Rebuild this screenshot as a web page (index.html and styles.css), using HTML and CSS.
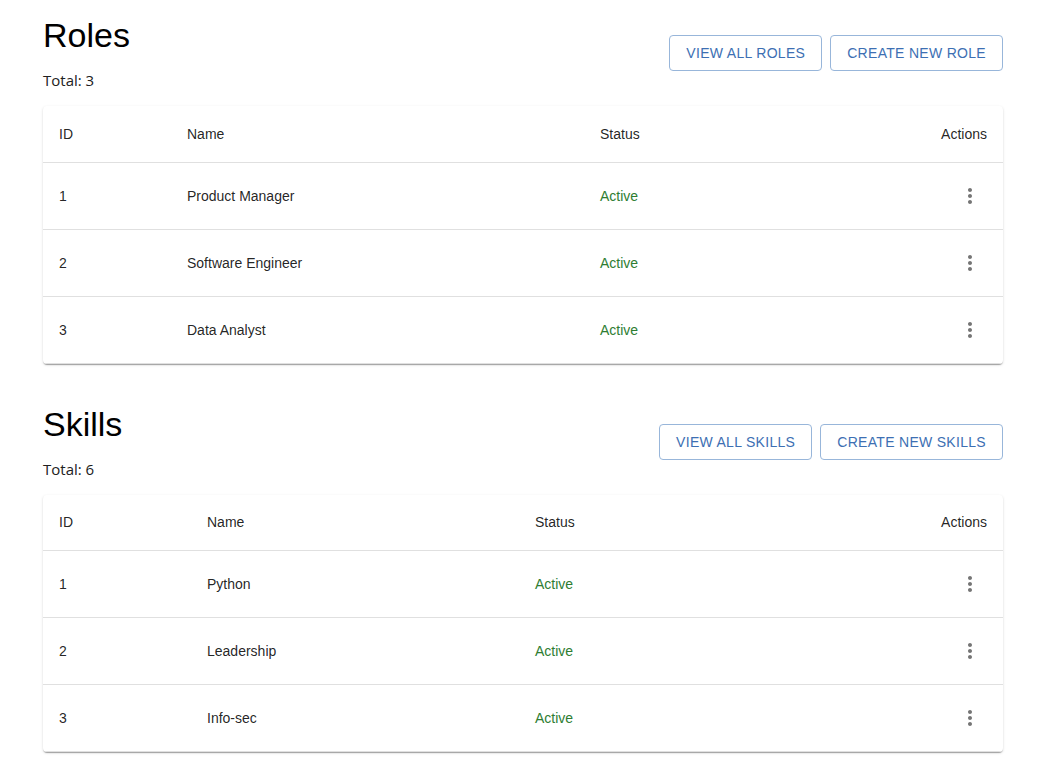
FILE: index.html
```html
<!DOCTYPE html>
<html lang="en">
<head>
<meta charset="utf-8">
<title>Roles and Skills</title>
<link rel="stylesheet" href="styles.css">
</head>
<body>
<main class="container">
  <section class="section">
    <header class="section-head">
      <div class="head-text">
        <h1 class="title">Roles</h1>
        <div class="total">Total: 3</div>
      </div>
      <div class="actions-bar">
        <button class="btn">View all roles</button>
        <button class="btn">Create new role</button>
      </div>
    </header>
    <div class="card">
      <table class="grid roles">
        <colgroup>
          <col class="c-id"><col class="c-name"><col class="c-status"><col class="c-act">
        </colgroup>
        <thead>
          <tr><th>ID</th><th>Name</th><th>Status</th><th class="right">Actions</th></tr>
        </thead>
        <tbody>
          <tr><td>1</td><td>Product Manager</td><td class="active">Active</td><td class="right"><button class="icon-btn" aria-label="more"><svg viewBox="0 0 24 24" width="24" height="24"><path d="M12 8c1.1 0 2-.9 2-2s-.9-2-2-2-2 .9-2 2 .9 2 2 2zm0 2c-1.1 0-2 .9-2 2s.9 2 2 2 2-.9 2-2-.9-2-2-2zm0 6c-1.1 0-2 .9-2 2s.9 2 2 2 2-.9 2-2-.9-2-2-2z"/></svg></button></td></tr>
          <tr><td>2</td><td>Software Engineer</td><td class="active">Active</td><td class="right"><button class="icon-btn" aria-label="more"><svg viewBox="0 0 24 24" width="24" height="24"><path d="M12 8c1.1 0 2-.9 2-2s-.9-2-2-2-2 .9-2 2 .9 2 2 2zm0 2c-1.1 0-2 .9-2 2s.9 2 2 2 2-.9 2-2-.9-2-2-2zm0 6c-1.1 0-2 .9-2 2s.9 2 2 2 2-.9 2-2-.9-2-2-2z"/></svg></button></td></tr>
          <tr><td>3</td><td>Data Analyst</td><td class="active">Active</td><td class="right"><button class="icon-btn" aria-label="more"><svg viewBox="0 0 24 24" width="24" height="24"><path d="M12 8c1.1 0 2-.9 2-2s-.9-2-2-2-2 .9-2 2 .9 2 2 2zm0 2c-1.1 0-2 .9-2 2s.9 2 2 2 2-.9 2-2-.9-2-2-2zm0 6c-1.1 0-2 .9-2 2s.9 2 2 2 2-.9 2-2-.9-2-2-2z"/></svg></button></td></tr>
        </tbody>
      </table>
    </div>
  </section>

  <section class="section">
    <header class="section-head">
      <div class="head-text">
        <h1 class="title">Skills</h1>
        <div class="total">Total: 6</div>
      </div>
      <div class="actions-bar">
        <button class="btn">View all skills</button>
        <button class="btn">Create new skills</button>
      </div>
    </header>
    <div class="card">
      <table class="grid skills">
        <colgroup>
          <col class="c-id"><col class="c-name"><col class="c-status"><col class="c-act">
        </colgroup>
        <thead>
          <tr><th>ID</th><th>Name</th><th>Status</th><th class="right">Actions</th></tr>
        </thead>
        <tbody>
          <tr><td>1</td><td>Python</td><td class="active">Active</td><td class="right"><button class="icon-btn" aria-label="more"><svg viewBox="0 0 24 24" width="24" height="24"><path d="M12 8c1.1 0 2-.9 2-2s-.9-2-2-2-2 .9-2 2 .9 2 2 2zm0 2c-1.1 0-2 .9-2 2s.9 2 2 2 2-.9 2-2-.9-2-2-2zm0 6c-1.1 0-2 .9-2 2s.9 2 2 2 2-.9 2-2-.9-2-2-2z"/></svg></button></td></tr>
          <tr><td>2</td><td>Leadership</td><td class="active">Active</td><td class="right"><button class="icon-btn" aria-label="more"><svg viewBox="0 0 24 24" width="24" height="24"><path d="M12 8c1.1 0 2-.9 2-2s-.9-2-2-2-2 .9-2 2 .9 2 2 2zm0 2c-1.1 0-2 .9-2 2s.9 2 2 2 2-.9 2-2-.9-2-2-2zm0 6c-1.1 0-2 .9-2 2s.9 2 2 2 2-.9 2-2-.9-2-2-2z"/></svg></button></td></tr>
          <tr><td>3</td><td>Info-sec</td><td class="active">Active</td><td class="right"><button class="icon-btn" aria-label="more"><svg viewBox="0 0 24 24" width="24" height="24"><path d="M12 8c1.1 0 2-.9 2-2s-.9-2-2-2-2 .9-2 2 .9 2 2 2zm0 2c-1.1 0-2 .9-2 2s.9 2 2 2 2-.9 2-2-.9-2-2-2zm0 6c-1.1 0-2 .9-2 2s.9 2 2 2 2-.9 2-2-.9-2-2-2z"/></svg></button></td></tr>
        </tbody>
      </table>
    </div>
  </section>
</main>
</body>
</html>
```

FILE: styles.css
```css
* { box-sizing: border-box; }

html, body {
  margin: 0;
  background: #ffffff;
  font-family: "Liberation Sans", Arial, sans-serif;
  color: rgba(0, 0, 0, 0.87);
}

body {
  padding: 0 43px;
}

.container {
  width: 960px;
  padding-top: 15px;
}

.section {
  margin-bottom: 40px;
}

.section-head {
  display: flex;
  justify-content: space-between;
  align-items: center;
  margin-bottom: 15px;
}

.title {
  margin: 0;
  font-family: "Liberation Sans", Arial, sans-serif;
  font-size: 34px;
  font-weight: 400;
  line-height: 41px;
  color: #000;
}

.total {
  margin-top: 13px;
  font-family: "Open Sans", "Noto Sans", sans-serif;
  font-size: 15px;
  line-height: 22px;
  color: #212121;
}

.actions-bar {
  display: flex;
  gap: 8px;
}

.btn {
  height: 36px;
  padding: 0 16px;
  border: 1px solid #98b6da;
  border-radius: 4px;
  background: #fff;
  color: #3d6fb3;
  font-family: "Liberation Sans", Arial, sans-serif;
  font-size: 14px;
  font-weight: 400;
  letter-spacing: 0.3px;
  text-transform: uppercase;
  cursor: pointer;
}

.card {
  background: #fff;
  border-radius: 4px;
  box-shadow: 0 2px 1px -1px rgba(0,0,0,0.2), 0 1px 1px 0 rgba(0,0,0,0.14), 0 1px 3px 0 rgba(0,0,0,0.12);
  overflow: hidden;
}

.grid {
  width: 100%;
  border-collapse: collapse;
  table-layout: fixed;
  font-size: 14px;
}

.grid th,
.grid td {
  padding: 0 16px;
  text-align: left;
  border-bottom: 1px solid #e0e0e0;
  font-weight: 400;
  color: rgba(0, 0, 0, 0.87);
}

.grid th {
  height: 56px;
}

.grid td {
  height: 67px;
}

.grid .right {
  text-align: right;
}

.grid td.active {
  color: #2e7d32;
}

.roles .c-id { width: 128px; }
.roles .c-name { width: 413px; }
.roles .c-status { width: 260px; }

.skills .c-id { width: 148px; }
.skills .c-name { width: 328px; }
.skills .c-status { width: 300px; }

.icon-btn {
  display: inline-flex;
  align-items: center;
  justify-content: center;
  padding: 5px;
  margin: 0;
  border: none;
  background: transparent;
  border-radius: 50%;
  cursor: pointer;
  vertical-align: middle;
}

.icon-btn svg {
  display: block;
  fill: #757575;
}
```
